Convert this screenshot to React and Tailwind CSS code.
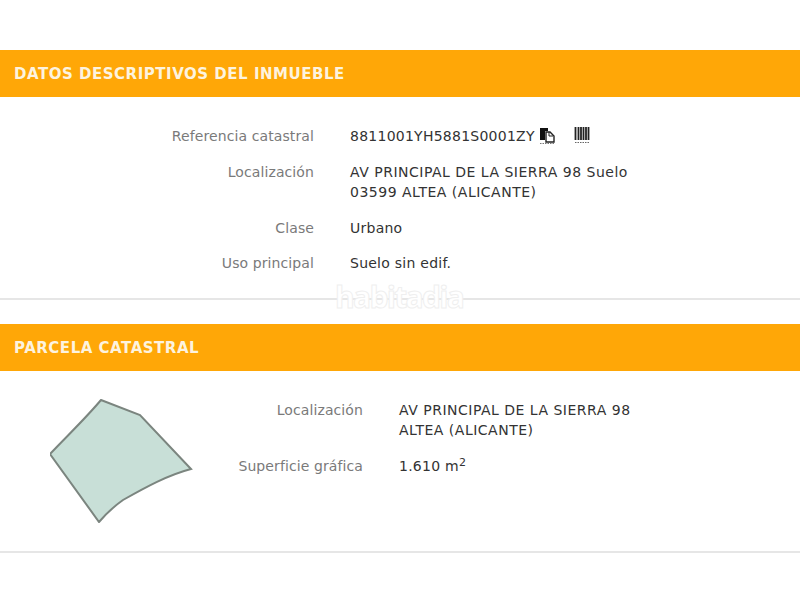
import React from 'react';

const font = "font-['DejaVu_Sans','Liberation_Sans',sans-serif]";

const Header = ({ title }) => (
  <div className="h-[47px] bg-[#ffa707] flex items-center pl-[14px] pt-[1px]">
    <h2 className="text-[15px] font-bold text-[#fdf3df] tracking-[0.52px]">{title}</h2>
  </div>
);

const Row = ({ label, labelWidth, children, className = '', valueClass = 'tracking-[0.25px]' }) => (
  <div className={`flex ${className}`}>
    <div className={`${labelWidth} text-right text-[14px] leading-[20px] tracking-[0.1px] text-[#7a7a7a] shrink-0`}>{label}</div>
    <div className={`ml-[36px] text-[14px] leading-[20px] text-[#333333] ${valueClass}`}>{children}</div>
  </div>
);

const CopyIcon = () => (
  <svg width="16" height="18" viewBox="0 0 16 18" className="ml-[4px]">
    <path d="M1 1h8v3h-3v9H1z" fill="#111" />
    <path d="M7 5h4l4 4v6H7z" fill="#fff" stroke="#222" strokeWidth="1.4" />
    <path d="M10 5v4h4" fill="none" stroke="#222" />
    <path d="M1 16.5h14" stroke="#777" strokeDasharray="1.5 1" />
  </svg>
);

const BarcodeIcon = () => (
  <svg width="16" height="18" viewBox="0 0 16 18" className="ml-[19px]">
    <path d="M1.5 0v13M4.5 0v13M7 0v13M9.5 0v13M12 0v13M14.5 0v13" stroke="#222" strokeWidth="1.8" />
    <path d="M1 15.5h14" stroke="#666" strokeDasharray="1.5 1" />
  </svg>
);

const Parcel = () => (
  <svg width="144" height="124" viewBox="0 0 144 124" className="shrink-0">
    <path
      d="M51 1 L90 16 L141 70 C118 76 96 88 73 101 C63 108 55 116 49 123 L0 55 C18 36 35 20 51 1 Z"
      fill="#c8dfd7"
      stroke="#7b857f"
      strokeWidth="2"
    />
  </svg>
);

export default function App() {
  return (
    <div className={`${font} relative w-[800px] h-[600px] bg-white overflow-hidden pt-[50px]`}>
      <Header title="DATOS DESCRIPTIVOS DEL INMUEBLE" />
      <div className="pt-[29px] pb-[25px] border-b-2 border-[#e6e6e6]">
        <Row label="Referencia catastral" labelWidth="w-[314px]">
          <div className="flex items-center h-[20px]">
            8811001YH5881S0001ZY
            <CopyIcon />
            <BarcodeIcon />
          </div>
        </Row>
        <Row label="Localización" labelWidth="w-[314px]" className="mt-[16px]" valueClass="tracking-[0.5px]">
          AV PRINCIPAL DE LA SIERRA 98 Suelo
          <br />
          03599 ALTEA (ALICANTE)
        </Row>
        <Row label="Clase" labelWidth="w-[314px]" className="mt-[16px]">
          Urbano
        </Row>
        <Row label="Uso principal" labelWidth="w-[314px]" className="mt-[15px]">
          Suelo sin edif.
        </Row>
      </div>

      <div className="mt-[24px]">
        <Header title="PARCELA CATASTRAL" />
      </div>
      <div className="h-[182px] border-b-2 border-[#e6e6e6] flex pl-[50px] pt-[28px]">
        <Parcel />
        <div className="pt-[1px]">
          <Row label="Localización" labelWidth="w-[169px]" valueClass="tracking-[0.5px]">
            AV PRINCIPAL DE LA SIERRA 98
            <br />
            ALTEA (ALICANTE)
          </Row>
          <Row label="Superficie gráfica" labelWidth="w-[169px]" className="mt-[16px]">
            1.610 m<sup className="text-[11px]">2</sup>
          </Row>
        </div>
      </div>

      <div className="absolute left-[335px] top-[278px] font-['Open_Sans',sans-serif] text-[30px] leading-[38px] font-bold text-white [-webkit-text-stroke:1px_#efefef] tracking-[-1.7px]">
        habitadia
      </div>
    </div>
  );
}
